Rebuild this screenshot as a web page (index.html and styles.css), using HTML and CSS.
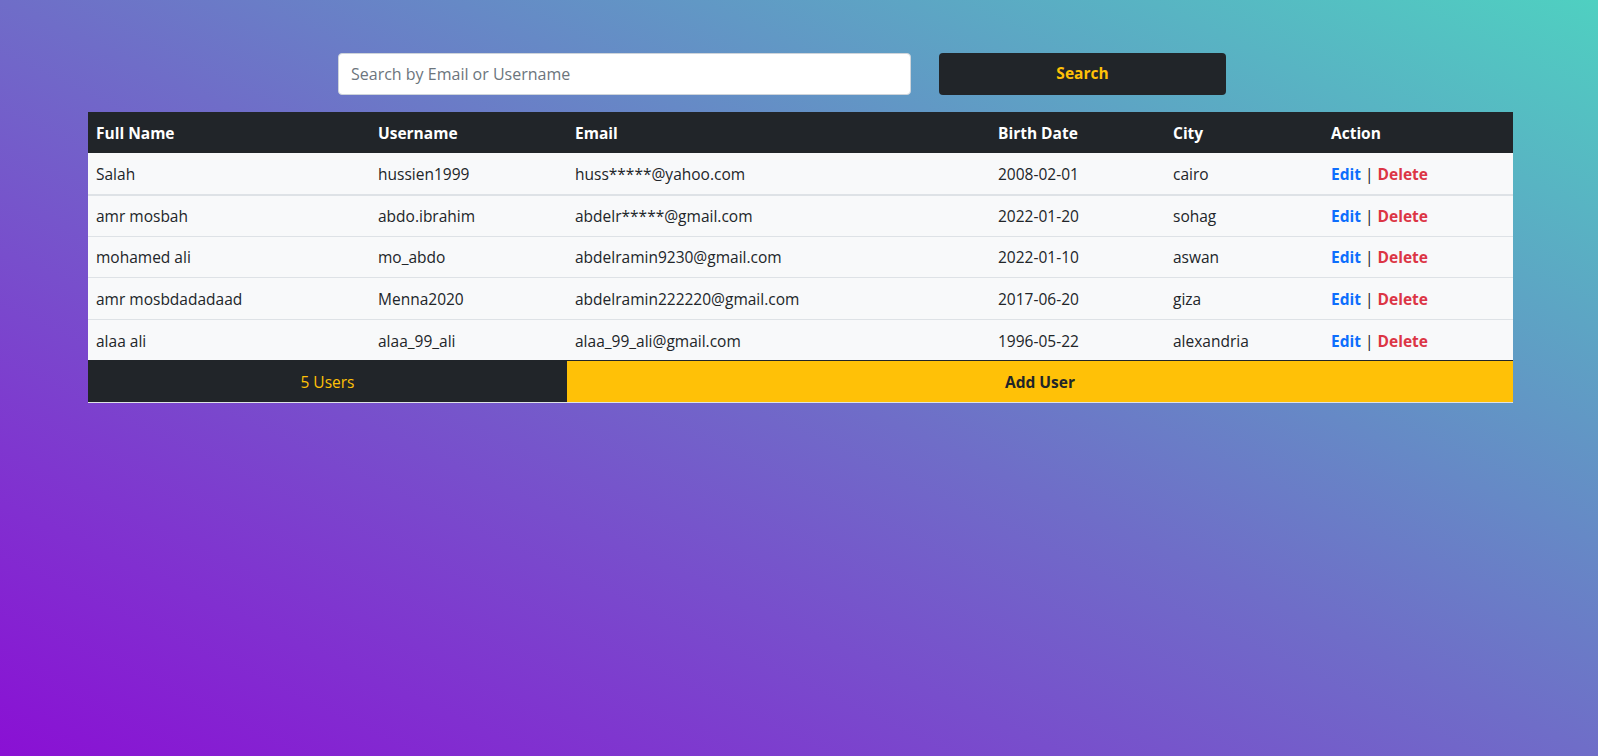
FILE: index.html
```html
<!DOCTYPE html>
<html lang="en">
<head>
<meta charset="utf-8">
<title>Users</title>
<link rel="stylesheet" href="styles.css">
</head>
<body>
<main class="page">
  <form class="search-bar">
    <input class="search-input" type="text" placeholder="Search by Email or Username">
    <button class="search-btn" type="button">Search</button>
  </form>
  <table class="users">
    <colgroup>
      <col class="c-name"><col class="c-user"><col class="c-email"><col class="c-date"><col class="c-city"><col class="c-action">
    </colgroup>
    <thead>
      <tr><th>Full Name</th><th>Username</th><th>Email</th><th>Birth Date</th><th>City</th><th>Action</th></tr>
    </thead>
    <tbody>
      <tr class="first"><td>Salah</td><td>hussien1999</td><td>huss*****@yahoo.com</td><td>2008-02-01</td><td>cairo</td><td><a class="edit">Edit</a> | <a class="del">Delete</a></td></tr>
      <tr><td>amr mosbah</td><td>abdo.ibrahim</td><td>abdelr*****@gmail.com</td><td>2022-01-20</td><td>sohag</td><td><a class="edit">Edit</a> | <a class="del">Delete</a></td></tr>
      <tr><td>mohamed ali</td><td>mo_abdo</td><td>abdelramin9230@gmail.com</td><td>2022-01-10</td><td>aswan</td><td><a class="edit">Edit</a> | <a class="del">Delete</a></td></tr>
      <tr><td>amr mosbdadadaad</td><td>Menna2020</td><td>abdelramin222220@gmail.com</td><td>2017-06-20</td><td>giza</td><td><a class="edit">Edit</a> | <a class="del">Delete</a></td></tr>
      <tr><td>alaa ali</td><td>alaa_99_ali</td><td>alaa_99_ali@gmail.com</td><td>1996-05-22</td><td>alexandria</td><td><a class="edit">Edit</a> | <a class="del">Delete</a></td></tr>
    </tbody>
    <tfoot>
      <tr><td class="count" colspan="2">5 Users</td><td class="add" colspan="4">Add User</td></tr>
    </tfoot>
  </table>
</main>
</body>
</html>
```
FILE: styles.css
```css
* { box-sizing: border-box; }
html, body { height: 100%; }
body {
  margin: 0;
  font-family: "Segoe UI", "Open Sans", "Liberation Sans", sans-serif;
  font-size: 15.5px;
  line-height: 1.5;
  color: #212529;
  background: linear-gradient(to top right, #8a10d4 0%, #6f6dc8 50%, #4fd0c1 100%);
  background-attachment: fixed;
}
.page {
  padding: 53px 0 0 88px;
}
.search-bar {
  display: flex;
  margin: 0 0 17px 250px;
}
.search-input {
  width: 573px;
  height: 42px;
  padding: 0 12px;
  font: inherit;
  font-size: 16px;
  color: #212529;
  background: #fff;
  border: 1px solid #ced4da;
  border-radius: 4px;
  outline: none;
}
.search-input::placeholder { color: #6c757d; }
.search-btn {
  width: 287px;
  height: 42px;
  margin-left: 28px;
  font: inherit;
  font-weight: 700;
  color: #ffc107;
  background: #212529;
  border: 0;
  border-radius: 4px;
}
.users {
  width: 1425px;
  border-collapse: collapse;
}
.c-name { width: 282px; }
.c-user { width: 197px; }
.c-email { width: 423px; }
.c-date { width: 175px; }
.c-city { width: 158px; }
.c-action { width: 190px; }
.users th, .users td {
  text-align: left;
  padding: 9px 8px 7px;
  height: 41.6px;
}
.users thead th {
  height: 41px;
  background: #212529;
  color: #fff;
  font-weight: 700;
}
.users tbody td {
  background: #f8f9fa;
  border-bottom: 1px solid #dee2e6;
}
.users tbody tr.first td { border-bottom-width: 2px; }
.users tbody tr:last-child td { border-bottom: 1px solid #212529; }
.users tfoot td {
  text-align: center;
  height: 42px;
  border-bottom: 1px solid #dee2e6;
}
.count { background: #212529; color: #ffc107; }
.add { background: #ffc107; color: #212529; font-weight: 700; }
.edit { color: #0d6efd; font-weight: 700; }
.del { color: #dc3545; font-weight: 700; }
```
